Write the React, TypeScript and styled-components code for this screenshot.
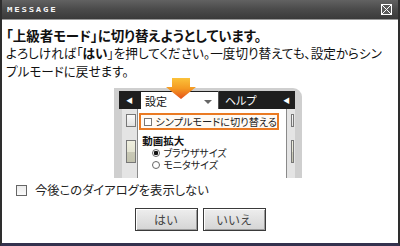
import React from "react";
import styled, { createGlobalStyle } from "styled-components";

const Global = createGlobalStyle`
  html, body { margin: 0; padding: 0; background: #fff; }
  body { font-family: "Noto Sans CJK JP", "Noto Sans", sans-serif; }
`;

const Window = styled.div`
  width: 400px;
  height: 246px;
  box-sizing: border-box;
  display: flex;
  flex-direction: column;
  background: #fff;
  border-left: 2px solid #2e2e2e;
  border-right: 2px solid #2e2e2e;
  border-bottom: 3px solid #34324e;
  overflow: hidden;
`;

const TitleBar = styled.div`
  height: 20px;
  flex: none;
  display: flex;
  align-items: center;
  justify-content: space-between;
  padding: 0 6px 0 5px;
  background: linear-gradient(#626262 0%, #4c4c4c 45%, #3a3a3a 100%);
  border-bottom: 1px solid #9a9a9a;
  box-sizing: border-box;
`;

const TitleText = styled.span`
  font-family: "DejaVu Sans Mono", monospace;
  font-weight: bold;
  font-size: 9px;
  letter-spacing: 1.8px;
  color: #f4f4f4;
  line-height: 1;
  transform: scaleY(0.85);
`;

const CloseBox = styled.div`
  width: 11px;
  height: 11px;
  display: flex;
`;

const Body = styled.div`
  flex: 1;
  display: flex;
  flex-direction: column;
  padding: 6px 4px 0 4px;
  color: #111;
`;

const Heading = styled.div`
  font-size: 13.5px;
  font-weight: bold;
  line-height: 18px;
  font-feature-settings: "palt";
  white-space: nowrap;
`;

const Para = styled.div`
  font-size: 12.6px;
  line-height: 18px;
  font-feature-settings: "palt";
  white-space: nowrap;
  b { font-weight: bold; }
`;

const Preview = styled.div`
  position: relative;
  margin: 8px 0 0 108px;
  width: 188px;
  height: 90px;
  background: #cfcfcf;
  border-radius: 0 9px 0 0;
  padding-top: 3px;
  box-sizing: border-box;
  display: flex;
  flex-direction: column;
  font-feature-settings: "palt";
  white-space: nowrap;
`;

const MenuBar = styled.div`
  height: 18px;
  margin: 0 7px 0 5px;
  background: #1e1e1e;
  display: flex;
  align-items: stretch;
  flex: none;
`;

const BarCap = styled.div`
  width: 22px;
  display: flex;
  align-items: center;
  justify-content: flex-end;
  padding-right: 8px;
  box-sizing: border-box;
  color: #fff;
  font-size: 7px;
`;

const Tab = styled.div`
  width: 77px;
  background: #fff;
  margin-top: 1px;
  display: flex;
  align-items: center;
  justify-content: space-between;
  padding: 0 6px 0 4px;
  box-sizing: border-box;
  font-size: 11px;
  color: #111;
`;

const Caret = styled.span`
  width: 0;
  height: 0;
  border-left: 4px solid transparent;
  border-right: 4px solid transparent;
  border-top: 4px solid #666;
  margin-top: 3px;
`;

const HelpSeg = styled.div`
  flex: 1;
  display: flex;
  align-items: center;
  justify-content: space-between;
  padding: 0 5px 0 6px;
  color: #fff;
  font-size: 11px;
  border-left: 1px solid #555;
`;

const SmallArrow = styled.span`
  font-size: 7px;
`;

const Lower = styled.div`
  flex: 1;
  display: flex;
  margin: 0 7px 0 8px;
`;

const Stub = styled.div<{ $w: number }>`
  width: ${(p) => p.$w}px;
  display: flex;
  flex-direction: column;
  gap: 13px;
  padding-top: 5px;
  background: #e4e4e4;
`;

const StubButton = styled.div<{ $tone: "plain" | "pale" }>`
  height: ${(p) => (p.$tone === "plain" ? 11 : 21)}px;
  margin: 0 1px 0 4px;
  border: 1px solid #777;
  background: ${(p) =>
    p.$tone === "plain"
      ? "linear-gradient(#fafafa, #e2e2e2)"
      : "linear-gradient(#efefdf 0%, #e4e4d2 50%, #c9c9b6 51%, #c2c2ae 100%)"};
`;

const Dropdown = styled.div`
  flex: 1;
  background: #fff;
  border-left: 1px solid #8a8a8a;
  border-right: 1px solid #8a8a8a;
  padding: 4px 7px 0 1px;
  display: flex;
  flex-direction: column;
`;

const HighlightItem = styled.div`
  height: 17px;
  box-sizing: border-box;
  border: 2px solid #ea7a22;
  background: #fffaf4;
  display: flex;
  align-items: center;
  gap: 3px;
  padding-left: 3px;
  font-size: 10.2px;
  color: #222;
`;

const SmallBox = styled.span`
  width: 6px;
  height: 6px;
  border: 1px solid #777;
  background: #fff;
  flex: none;
`;

const GroupTitle = styled.div`
  margin: 4px 0 0 3px;
  font-size: 10.5px;
  font-weight: bold;
  line-height: 13px;
`;

const RadioRow = styled.div`
  margin-left: 13px;
  display: flex;
  align-items: center;
  gap: 3px;
  font-size: 10px;
  line-height: 12px;
  color: #222;
`;

const Radio = styled.span<{ $on?: boolean }>`
  width: 6px;
  height: 6px;
  border-radius: 50%;
  border: 1px solid #666;
  background: ${(p) => (p.$on ? "radial-gradient(circle, #111 0 2px, #fff 2.5px)" : "#fff")};
  flex: none;
`;

const Arrow = styled.svg`
  position: absolute;
  left: 51px;
  top: -10px;
`;

const CheckRow = styled.label`
  display: flex;
  align-items: center;
  gap: 8px;
  margin: 4px 0 0 10px;
  font-size: 12.3px;
  line-height: 16px;
  font-feature-settings: "palt";
  color: #222;
`;

const CheckBox = styled.span`
  width: 9px;
  height: 9px;
  border: 1px solid #666;
  background: linear-gradient(#ececec, #fafafa);
`;

const Buttons = styled.div`
  display: flex;
  justify-content: center;
  gap: 5px;
  margin-top: 10px;
`;

const Button = styled.button`
  width: 63px;
  height: 23px;
  box-sizing: border-box;
  border: 1px solid #3a3a3a;
  box-shadow: inset 1px 1px 0 #fff, inset -1px -1px 0 #9c9c9c;
  background: linear-gradient(#eeeeee, #d4d4d4);
  font-family: "Noto Sans CJK JP", sans-serif;
  font-size: 12px;
  color: #444;
  padding: 0;
`;

export default function App() {
  return (
    <>
      <Global />
      <Window>
        <TitleBar>
          <TitleText>MESSAGE</TitleText>
          <CloseBox>
            <svg width="11" height="11" viewBox="0 0 11 11">
              <rect x="0.5" y="0.5" width="10" height="10" fill="#5a5a5a" stroke="#fff" />
              <path d="M1 1 L10 10 M10 1 L1 10" stroke="#fff" strokeWidth="1" />
            </svg>
          </CloseBox>
        </TitleBar>
        <Body>
          <Heading>「上級者モード」に切り替えようとしています。</Heading>
          <Para>
            よろしければ「<b>はい</b>」を押してください。一度切り替えても、設定からシン
            <br />
            プルモードに戻せます。
          </Para>
          <Preview>
            <MenuBar>
              <BarCap>◀</BarCap>
              <Tab>
                設定
                <Caret />
              </Tab>
              <HelpSeg>
                ヘルプ
                <SmallArrow>◀</SmallArrow>
              </HelpSeg>
            </MenuBar>
            <Lower>
              <Stub $w={17}>
                <StubButton $tone="plain" />
                <StubButton $tone="pale" />
              </Stub>
              <Dropdown>
                <HighlightItem>
                  <SmallBox />
                  シンプルモードに切り替える
                </HighlightItem>
                <GroupTitle>動画拡大</GroupTitle>
                <RadioRow>
                  <Radio $on />
                  ブラウザサイズ
                </RadioRow>
                <RadioRow>
                  <Radio />
                  モニタサイズ
                </RadioRow>
              </Dropdown>
              <Stub $w={9}>
                <StubButton $tone="plain" />
                <StubButton $tone="pale" />
              </Stub>
            </Lower>
            <Arrow width="32" height="22" viewBox="0 0 32 22">
              <defs>
                <linearGradient id="ag" x1="0" y1="0" x2="0" y2="1">
                  <stop offset="0" stopColor="#fbc23a" />
                  <stop offset="0.5" stopColor="#f59a22" />
                  <stop offset="1" stopColor="#e4501a" />
                </linearGradient>
              </defs>
              <path d="M7 0 H25 V9 H31 L16 21 L1 9 H7 Z" fill="url(#ag)" />
            </Arrow>
          </Preview>
          <CheckRow>
            <CheckBox />
            今後このダイアログを表示しない
          </CheckRow>
          <Buttons>
            <Button>はい</Button>
            <Button>いいえ</Button>
          </Buttons>
        </Body>
      </Window>
    </>
  );
}
